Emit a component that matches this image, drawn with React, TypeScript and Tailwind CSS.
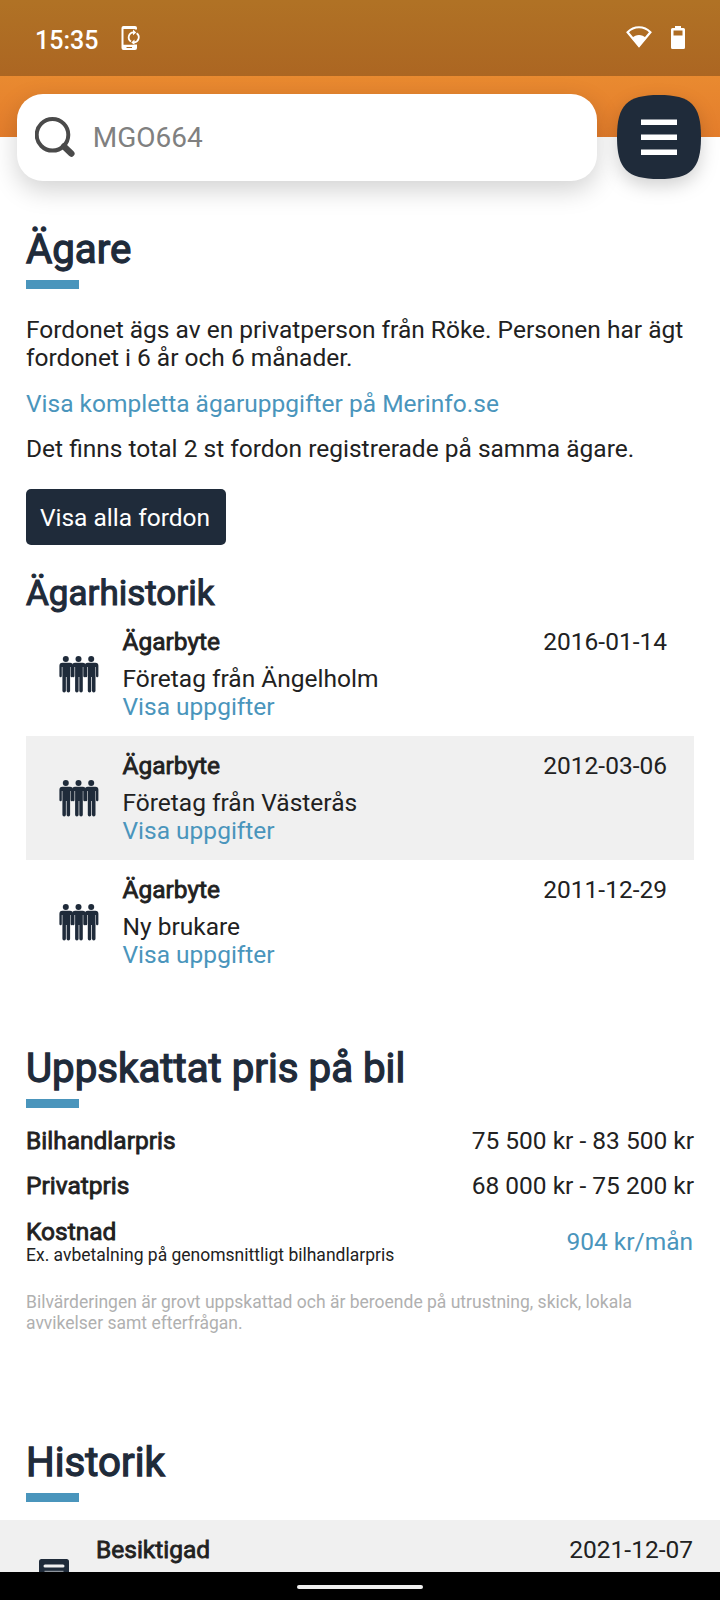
import type { ReactNode } from 'react'

interface OwnerChange {
  date: string
  description: string
}

const ownerChanges: OwnerChange[] = [
  { date: '2016-01-14', description: 'Företag från Ängelholm' },
  { date: '2012-03-06', description: 'Företag från Västerås' },
  { date: '2011-12-29', description: 'Ny brukare' },
]

function PhoneSyncIcon() {
  return (
    <svg className="h-6 w-5" viewBox="0 0 20 24" fill="none">
      <path
        fill="#fff"
        fillRule="evenodd"
        d="M2.5 0H14a2 2 0 0 1 2 2v1.5h-2.2V3H2.5v15.8H14v-.3h2V22a2 2 0 0 1-2 2H2.5a2 2 0 0 1-2-2V2a2 2 0 0 1 2-2zM5.5 21v1H11v-1z"
      />
      <path d="M10 15.6A5 5 0 0 1 12.5 6.4M15.6 7.3A5 5 0 0 1 13 16.4" stroke="#fff" strokeWidth="1.8" />
      <path d="M12 3.6l3.2 2.8-3.2 2.8zM13.5 13.6V19l-3.2-2.6z" fill="#fff" />
    </svg>
  )
}

function WifiIcon() {
  return (
    <svg className="h-[22px] w-[26px]" viewBox="0 0 26 22" fill="none">
      <path d="M1.6 6.2C8 -.4 18 -.4 24.4 6.2L13 20z" stroke="#fff" strokeWidth="2.2" />
      <path d="M6 12C10 8 16 8 20 12L13 21z" fill="#fff" />
    </svg>
  )
}

function BatteryIcon() {
  return (
    <svg className="h-[23px] w-3.5" viewBox="0 0 14 23">
      <path
        fill="#fff"
        fillRule="evenodd"
        d="M4 0h6v2h2.5A1.5 1.5 0 0 1 14 3.5v18a1.5 1.5 0 0 1-1.5 1.5h-11A1.5 1.5 0 0 1 0 21.5v-18A1.5 1.5 0 0 1 1.5 2H4zM2.5 4.5v5h9v-5z"
      />
    </svg>
  )
}

function SearchIcon() {
  return (
    <svg className="h-10 w-10" viewBox="0 0 40 40" fill="none" stroke="#4a4a4a">
      <circle cx="17.5" cy="17.8" r="15.8" strokeWidth="4" />
      <path d="M29 29.5l7.3 7" strokeWidth="6.5" strokeLinecap="round" />
    </svg>
  )
}

function MenuButton() {
  return (
    <button className="mt-[1.5px] ml-5 h-[84px] w-[84px] drop-shadow-[0_7px_9px_rgba(0,0,0,0.18)]">
      <svg viewBox="0 0 84 84">
        <path fill="#1f2b3a" d="M42 0C74 0 84 10 84 42S74 84 42 84 0 74 0 42 10 0 42 0z" />
        <path fill="#fff" d="M24 24.5h36V30H24zM24 39.5h36V45H24zM24 54.5h36V60H24z" />
      </svg>
    </button>
  )
}

function Person({ x }: { x: number }) {
  return (
    <g transform={`translate(${x} 0)`}>
      <circle cx="7.5" cy="3" r="3" />
      <path d="M3.3 6.8h8.4a3 3 0 0 1 3 3V20a1.2 1.2 0 0 1-2.4 0v-9h-.5v23.8a1.7 1.7 0 0 1-3.5 0V21h-.7v13.8a1.7 1.7 0 0 1-3.5 0V11h-.6v9a1.2 1.2 0 0 1-2.4 0V9.8a3 3 0 0 1 3-3z" />
    </g>
  )
}

function PeopleIcon() {
  return (
    <svg className="h-[37px] w-10" viewBox="0 0 40 37" fill="#1f2b3a">
      <Person x={-0.7} />
      <Person x={12} />
      <Person x={24.7} />
    </svg>
  )
}

function SectionTitle({ children }: { children: ReactNode }) {
  return (
    <div>
      <h2 className="text-[40.25px] leading-[51px] text-[#1f2b3a] [-webkit-text-stroke:1.3px]">{children}</h2>
      <div className="mt-[5px] h-[9px] w-[53px] bg-[#4a95bc]" />
    </div>
  )
}

function Label({ children }: { children: ReactNode }) {
  return <span className="[-webkit-text-stroke:0.8px]">{children}</span>
}

export default function App() {
  return (
    <div className="flex h-[1600px] w-[720px] flex-col overflow-hidden bg-white font-[Roboto,sans-serif] text-[24.5px] leading-7 text-[#212121]">
      {/* Status bar */}
      <div className="flex h-[76px] shrink-0 items-start bg-linear-to-b from-[#b07225] to-[#ac6622] px-[35px] text-white">
        <span className="mt-[26.5px] text-[25px] font-medium">15:35</span>
        <div className="mt-[26px] ml-[23px]">
          <PhoneSyncIcon />
        </div>
        <div className="mt-[26px] ml-auto flex gap-[19px]">
          <WifiIcon />
          <BatteryIcon />
        </div>
      </div>

      {/* Search */}
      <header className="flex h-[105px] shrink-0 items-start bg-[linear-gradient(#e98a30,#e47d2c)] bg-[length:100%_61px] bg-no-repeat pt-[17.5px] pl-[17.3px]">
        <div className="flex h-[87.5px] w-[580px] items-center rounded-[26px] bg-white pl-[18px] shadow-[0_9px_26px_rgba(0,0,0,0.18)]">
          <SearchIcon />
          <span className="mt-0.5 ml-[17.5px] text-[28px] text-[#808080]">MGO664</span>
        </div>
        <MenuButton />
      </header>

      <main className="px-[26px] pt-[43px]">
        <SectionTitle>Ägare</SectionTitle>
        <p className="mt-[27px]">
          Fordonet ägs av en privatperson från Röke. Personen har ägt
          <br />
          fordonet i 6 år och 6 månader.
        </p>
        <p className="mt-[18px] text-[#4a95bc]">Visa kompletta ägaruppgifter på Merinfo.se</p>
        <p className="mt-[17px]">Det finns total 2 st fordon registrerade på samma ägare.</p>
        <button className="mt-[26px] block h-14 w-[200px] rounded-[5px] bg-[#1f2b3a] pt-0.5 pr-0.5 text-white">
          Visa alla fordon
        </button>

        <h3 className="mt-[29px] h-[38px] text-[35px] leading-10 text-[#1f2b3a] [-webkit-text-stroke:1.1px]">
          Ägarhistorik
        </h3>
        <ul>
          {ownerChanges.map((change) => (
            <li
              key={change.date}
              className="flex h-[124px] items-start pt-4 pr-[27px] pl-[32.5px] even:bg-[#f0f0f0]"
            >
              <div className="mt-7">
                <PeopleIcon />
              </div>
              <div className="ml-6 flex-1">
                <Label>Ägarbyte</Label>
                <p className="mt-[9px]">{change.description}</p>
                <p className="text-[#4a95bc]">Visa uppgifter</p>
              </div>
              <span>{change.date}</span>
            </li>
          ))}
        </ul>

        <div className="mt-[59px]">
          <SectionTitle>Uppskattat pris på bil</SectionTitle>
        </div>
        <div className="mt-[19px] flex justify-between">
          <Label>Bilhandlarpris</Label>
          <span>75 500 kr - 83 500 kr</span>
        </div>
        <div className="mt-[17px] flex justify-between">
          <Label>Privatpris</Label>
          <span>68 000 kr - 75 200 kr</span>
        </div>
        <div className="mt-[18px] flex items-center justify-between">
          <div>
            <Label>Kostnad</Label>
            <p className="-mt-px text-[17.5px] leading-5">Ex. avbetalning på genomsnittligt bilhandlarpris</p>
          </div>
          <span className="pt-px pr-px text-[#4a95bc]">904 kr/mån</span>
        </div>
        <p className="mt-[27px] text-[17.5px] leading-[21px] text-[#b0b0b0]">
          Bilvärderingen är grovt uppskattad och är beroende på utrustning, skick, lokala
          <br />
          avvikelser samt efterfrågan.
        </p>

        <div className="mt-[103px]">
          <SectionTitle>Historik</SectionTitle>
        </div>
      </main>

      <div className="mt-[18px] flex min-h-0 flex-1 items-start overflow-hidden bg-[#f0f0f0] pt-4 pr-[27px] pl-[39px]">
        <svg className="mt-[23px] h-9 w-[30px]" viewBox="0 0 30 36">
          <rect width="30" height="36" rx="2.5" fill="#1f2b3a" />
          <path d="M6 7h18" stroke="#f0f0f0" strokeWidth="3" strokeLinecap="round" />
          <path d="M5.5 12.5h19" stroke="#8d949c" strokeWidth="1.5" />
        </svg>
        <div className="ml-[27px] flex-1">
          <Label>Besiktigad</Label>
        </div>
        <span>2021-12-07</span>
      </div>

      {/* Gesture bar */}
      <div className="flex h-7 shrink-0 justify-center bg-black pt-[13px]">
        <div className="h-1 w-[126px] rounded-full bg-[#f0f0f0]" />
      </div>
    </div>
  )
}
